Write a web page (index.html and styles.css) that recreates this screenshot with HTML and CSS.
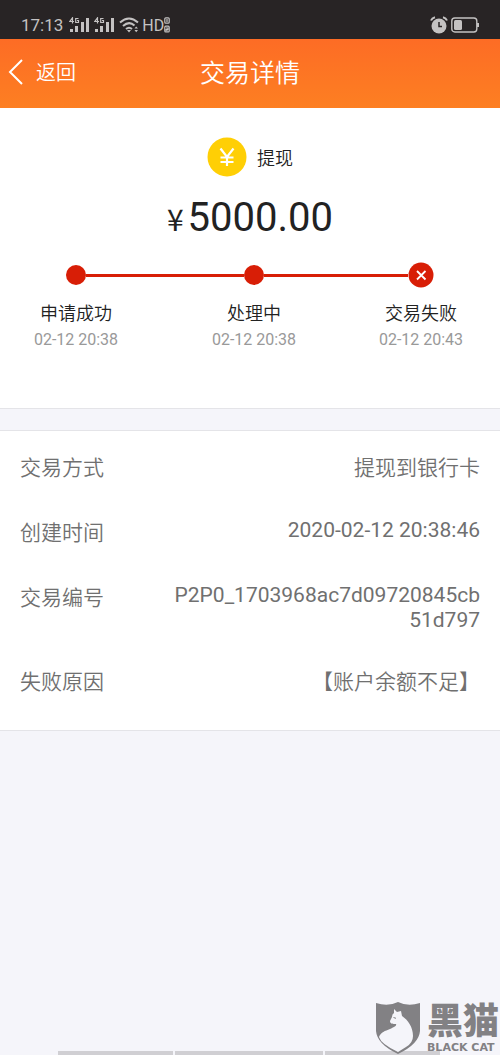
FILE: index.html
```html
<!DOCTYPE html>
<html lang="zh-CN">
<head>
<meta charset="utf-8">
<meta name="viewport" content="width=device-width, initial-scale=1">
<title>交易详情</title>
<link rel="stylesheet" href="styles.css">
</head>
<body class="page">
<div class="status">
  <div class="status-group">
    <span class="clock">17:13</span>
    <svg class="signal" width="22" height="16" viewBox="0 0 22 16" aria-hidden="true"><g fill="none" stroke="currentColor" stroke-width="1.200"><path d="M3.500 6.500V.8L.8 4.500H5M9.500 1.500H6.700V5.500H9.500V3.500H8"/></g><path fill="currentColor" d="M1 12h3v3H1zM6 9h3v6H6zM12 5h3v10h-3zM17 1h3v14h-3z"/></svg>
    <svg class="signal" width="22" height="16" viewBox="0 0 22 16" aria-hidden="true"><g fill="none" stroke="currentColor" stroke-width="1.200"><path d="M3.500 6.500V.8L.8 4.500H5M9.500 1.500H6.700V5.500H9.500V3.500H8"/></g><path fill="currentColor" d="M1 12h3v3H1zM6 9h3v6H6zM12 5h3v10h-3zM17 1h3v14h-3z"/></svg>
    <svg width="20" height="16" viewBox="0 0 20 16" aria-hidden="true"><g fill="none" stroke="currentColor" stroke-width="2"><path d="M1 5.500Q10-2.500 19 5.500M4 9Q10 3.500 15.500 8.500M7 12Q10 9.500 13 12"/></g><path fill="currentColor" d="M8 13h4l-2 2.500zM15.500 11.500l1.700-2 1.800 2zM15.500 13H19l-1.800 2.200z"/></svg>
    <span class="hd">HD</span>
    <svg class="sims" width="6" height="16" viewBox="0 0 6 16" fill="none" stroke="currentColor" stroke-width="1.200" aria-hidden="true"><rect x=".8" y=".8" width="4.400" height="5.400" rx="1"/><path d="M3 2v3M2 11h2v1.500H2V14h2"/><rect x=".8" y="9.200" width="4.400" height="5.800" rx="1"/></svg>
  </div>
  <div class="status-group">
    <svg width="18" height="18" viewBox="0 0 18 18" aria-hidden="true"><circle cx="9" cy="10" r="7.500" fill="currentColor"/><path d="M1 4.500Q2 2 5 1.200M17 4.500Q16 2 13 1.200" fill="none" stroke="currentColor" stroke-width="2"/><path d="M9 6v4.500h3" fill="none" stroke="#282425" stroke-width="1.500"/></svg>
    <svg class="battery" width="28" height="16" viewBox="0 0 28 16" aria-hidden="true"><rect x=".8" y="1" width="25" height="14" rx="3" fill="none" stroke="currentColor" stroke-width="1.400"/><rect x="3" y="3" width="8" height="10" rx="1.500" fill="currentColor"/><path d="M26 6h2v4h-2z" fill="currentColor"/></svg>
  </div>
</div>
<header class="nav">
  <a class="back" href="#"><svg width="15" height="26" viewBox="0 0 15 26" fill="none" stroke="currentColor" stroke-width="2" aria-hidden="true"><path d="M14 1L2 13l12 12"/></svg>返回</a>
  <h1 class="title">交易详情</h1>
</header>
<main>
  <section class="summary">
    <div class="kind">
      <svg width="40" height="40" viewBox="0 0 40 40" aria-hidden="true"><circle cx="20" cy="20" r="19.500" fill="#ffcf05"/><path d="M13.500 11.500L20 20l6.500-8.500M20 20v9M13.500 20.500h13M13.500 25h13" fill="none" stroke="#fff" stroke-width="2.200"/></svg>
      <span>提现</span>
    </div>
    <p class="amount"><span class="currency">¥</span>5000.00</p>
    <ol class="steps">
      <li class="step"><div class="track"><i class="dot"></i></div><span class="step-name">申请成功</span><time class="step-time">02-12 20:38</time></li>
      <li class="step"><div class="track"><i class="dot"></i></div><span class="step-name">处理中</span><time class="step-time">02-12 20:38</time></li>
      <li class="step"><div class="track"><svg width="26" height="26" viewBox="0 0 26 26" aria-hidden="true"><circle cx="13" cy="13" r="12.500" fill="#d81e06"/><path d="M9 9l8.500 8.500M17.500 9L9 17.500" stroke="#fff" stroke-width="1.800"/></svg></div><span class="step-name">交易失败</span><time class="step-time">02-12 20:43</time></li>
    </ol>
  </section>
  <dl class="details">
    <div class="row"><dt>交易方式</dt><dd>提现到银行卡</dd></div>
    <div class="row"><dt>创建时间</dt><dd class="latin">2020-02-12 20:38:46</dd></div>
    <div class="row"><dt>交易编号</dt><dd class="latin">P2P0_1703968ac7d09720845cb51d797</dd></div>
    <div class="row"><dt>失败原因</dt><dd>【账户余额不足】</dd></div>
  </dl>
</main>
<div class="dock"><i class="tab"></i><i class="tab tab-wide"></i><i class="tab"></i></div>
<div class="brand">
  <svg width="46" height="53" viewBox="0 0 46 53" aria-hidden="true"><path d="M1 1Q13 5 23 0Q33 5 45 1V29Q44 42 23 52Q2 42 1 29Z" fill="#828184"/><path d="M4 35C6 30 10 29 15 27C19 25 22 24 21 22C18 22 15 22 15 19L17 15Q17 12 19 11V7L22 10L26 9L27 14C33 18 38 25 38 34Q38 41 31 45L23 50Q6 42 4 35Z" fill="#f5f5fa"/><path d="M18.500 15.500l2.500.8" stroke="#828184"/></svg>
  <div class="brand-text"><span class="brand-cn">黑猫</span><span class="brand-en">BLACK CAT</span></div>
</div>
</body>
</html>
```
FILE: styles.css
```css
* { box-sizing: border-box; }

.page {
  position: relative;
  display: flex;
  flex-direction: column;
  min-height: 100vh;
  margin: 0;
  background: #f5f5fa;
  color: #222;
  font-family: Roboto, "Noto Sans CJK SC", sans-serif;
}

.status {
  display: flex;
  justify-content: space-between;
  height: 39px;
  padding: 11px 21px 0;
  background: #282425;
  color: #c4c2c2;
}
.status-group { display: flex; align-items: center; gap: 3px; }
.clock { margin-right: 3px; font-size: 17px; }
.hd { font-size: 16px; }
.sims { margin-left: -3px; }

.nav {
  display: grid;
  grid-template-columns: 1fr auto 1fr;
  align-items: center;
  height: 69px;
  padding: 0 8px 6px;
  background: linear-gradient(#fd6c25, #fd7f22);
  color: #fff;
}
.back {
  display: flex;
  align-items: center;
  gap: 13px;
  padding-top: 2px;
  color: inherit;
  font-size: 20px;
  font-weight: 350;
  text-decoration: none;
}
.title { margin: 0; font-size: 25px; font-weight: 350; }

.summary {
  padding: 29px 0 56px;
  background: #fff;
  border-bottom: 1px solid #e4e4e8;
}
.kind {
  display: flex;
  align-items: center;
  justify-content: center;
  gap: 10px;
  font-size: 18px;
  font-weight: 350;
}
.amount {
  display: flex;
  align-items: baseline;
  justify-content: center;
  gap: 4px;
  margin: 17px 0 0;
  font-size: 40px;
  line-height: 48px;
}
.currency {
  font-family: "Noto Sans CJK SC", sans-serif;
  font-size: 30px;
  line-height: 32px;
}

.steps {
  display: grid;
  grid-template-columns: 152fr 204fr 130fr;
  margin: 20px 0 0;
  padding: 0 14px 0 0;
  list-style: none;
}
.step { display: flex; flex-direction: column; align-items: center; }
.track {
  display: flex;
  align-items: center;
  align-self: stretch;
  height: 26px;
}
.track::before,
.track::after { content: ""; flex: 1; height: 3px; background: #d81e06; }
.step:first-child .track::before,
.step:last-child .track::after { background: none; }
.dot { width: 20px; height: 20px; border-radius: 50%; background: #d81e06; }
.step-name { margin-top: 12px; font-size: 18px; font-weight: 350; line-height: 28px; }
.step-time { color: #999; font-size: 16px; line-height: 24px; }

.details {
  display: flex;
  flex-direction: column;
  gap: 34px;
  margin: 21px 0 0;
  padding: 22px 20px 32px;
  border: solid #e4e4e8;
  border-width: 1px 0;
  background: #fff;
  color: #707070;
  font-size: 21px;
  font-weight: 350;
  line-height: 31px;
}
.row { display: flex; justify-content: space-between; gap: 40px; }
.row dt { flex: none; }
.row dd {
  max-width: 312px;
  margin: 0;
  text-align: right;
  overflow-wrap: anywhere;
}
.row .latin { font-weight: 400; line-height: 25px; }

.dock {
  display: flex;
  gap: 2px;
  height: 4px;
  margin: auto 60px 0 58px;
}
.tab { flex: 116; background: #d0cfd3; }
.tab-wide { flex: 148; }

.brand {
  position: absolute;
  right: 1px;
  bottom: 0;
  display: flex;
  align-items: flex-end;
  gap: 6px;
  color: #828184;
}
.brand-text { display: flex; flex-direction: column; }
.brand-cn { font-size: 36px; font-weight: 900; line-height: 38px; }
.brand-en { font-family: "DejaVu Sans", sans-serif; font-size: 11px; font-weight: 700; line-height: 14px; }
```
